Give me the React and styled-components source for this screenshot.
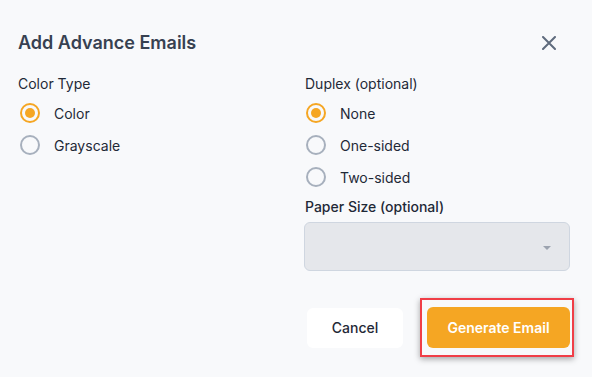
import React, { useState } from "react";
import styled, { createGlobalStyle } from "styled-components";

const Global = createGlobalStyle`
  html, body { margin: 0; padding: 0; background: #f8f9fb; }
  body { font-family: Inter, "Noto Sans", sans-serif; color: #1f2937; }
  * { box-sizing: border-box; }
`;

const Dialog = styled.div`
  width: 592px;
  height: 377px;
  background: #f8f9fb;
  display: flex;
  flex-direction: column;
`;

const Header = styled.div`
  display: flex;
  align-items: center;
  justify-content: space-between;
  padding: 30px 36px 0 18px;
  height: 56px;
`;

const Title = styled.h2`
  margin: 0;
  font-size: 18px;
  line-height: 26px;
  font-weight: 600;
  color: #374151;
`;

const Close = styled.button`
  width: 14px;
  height: 14px;
  padding: 0;
  border: 0;
  background: none;
  display: flex;
  cursor: pointer;
`;

const Body = styled.div`
  display: grid;
  grid-template-columns: 287px 1fr;
  padding: 18px 22px 0 18px;
`;

const Column = styled.div`
  display: flex;
  flex-direction: column;
`;

const Label = styled.div`
  font-size: 14px;
  line-height: 20px;
  color: #1f2937;
  font-weight: ${(p) => (p.$strong ? 500 : 400)};
  margin-top: ${(p) => p.$mt || 0}px;
  margin-bottom: ${(p) => p.$mb || 0}px;
`;

const Option = styled.label`
  display: flex;
  align-items: center;
  height: 32px;
  gap: 14px;
  font-size: 14px;
  color: #1f2937;
  cursor: pointer;
  padding-left: ${(p) => p.$pl || 2}px;
`;

const Circle = styled.span`
  width: 20px;
  height: 20px;
  border-radius: 50%;
  border: 2px solid ${(p) => (p.$on ? "#f5a623" : "#a7b0bd")};
  display: flex;
  align-items: center;
  justify-content: center;
  &::after {
    content: "";
    width: 10px;
    height: 10px;
    border-radius: 50%;
    background: ${(p) => (p.$on ? "#f5a623" : "transparent")};
  }
`;

const Select = styled.div`
  height: 49px;
  margin-left: -1px;
  background: #e5e7eb;
  border: 1px solid #cfd6e0;
  border-radius: 6px;
  display: flex;
  align-items: center;
  justify-content: flex-end;
  padding-right: 18px;
`;

const Caret = styled.span`
  width: 0;
  height: 0;
  border-left: 4px solid transparent;
  border-right: 4px solid transparent;
  border-top: 4px solid #9ca3af;
  margin-top: 2px;
`;

const Footer = styled.div`
  display: flex;
  justify-content: flex-end;
  align-items: center;
  gap: 17px;
  padding: 27px 18px 0 0;
`;

const Button = styled.button`
  height: ${(p) => p.$h || 40}px;
  width: ${(p) => p.$w}px;
  border: 0;
  border-radius: 6px;
  font-family: inherit;
  font-size: 14px;
  font-weight: ${(p) => (p.$primary ? 600 : 500)};
  color: ${(p) => (p.$primary ? "#ffffff" : "#1f2937")};
  background: ${(p) => (p.$primary ? "#f5a623" : "#ffffff")};
  cursor: pointer;
`;

const Highlight = styled.div`
  border: 2px solid #f03e47;
  padding: 7px 2px 7px 5px;
  box-shadow: 0 2px 6px rgba(0, 0, 0, 0.35);
  display: flex;
`;

function RadioGroup({ options, value, onChange, pl }) {
  return options.map((o) => (
    <Option key={o} $pl={pl} onClick={() => onChange(o)}>
      <Circle $on={value === o} />
      {o}
    </Option>
  ));
}

export default function App() {
  const [color, setColor] = useState("Color");
  const [duplex, setDuplex] = useState("None");
  return (
    <>
      <Global />
      <Dialog>
        <Header>
          <Title>Add Advance Emails</Title>
          <Close aria-label="Close">
            <svg width="14" height="14" viewBox="0 0 14 14">
              <path d="M1 1L13 13M13 1L1 13" stroke="#5f6b7d" strokeWidth="2" strokeLinecap="round" />
            </svg>
          </Close>
        </Header>
        <Body>
          <Column>
            <Label $mb={3}>Color Type</Label>
            <RadioGroup options={["Color", "Grayscale"]} value={color} onChange={setColor} pl={2} />
          </Column>
          <Column>
            <Label $mb={3}>Duplex (optional)</Label>
            <RadioGroup options={["None", "One-sided", "Two-sided"]} value={duplex} onChange={setDuplex} pl={1} />
            <Label $strong $mt={4} $mb={5}>Paper Size (optional)</Label>
            <Select>
              <Caret />
            </Select>
          </Column>
        </Body>
        <Footer>
          <Button $w={96}>Cancel</Button>
          <Highlight>
            <Button $primary $w={143} $h={41}>Generate Email</Button>
          </Highlight>
        </Footer>
      </Dialog>
    </>
  );
}
